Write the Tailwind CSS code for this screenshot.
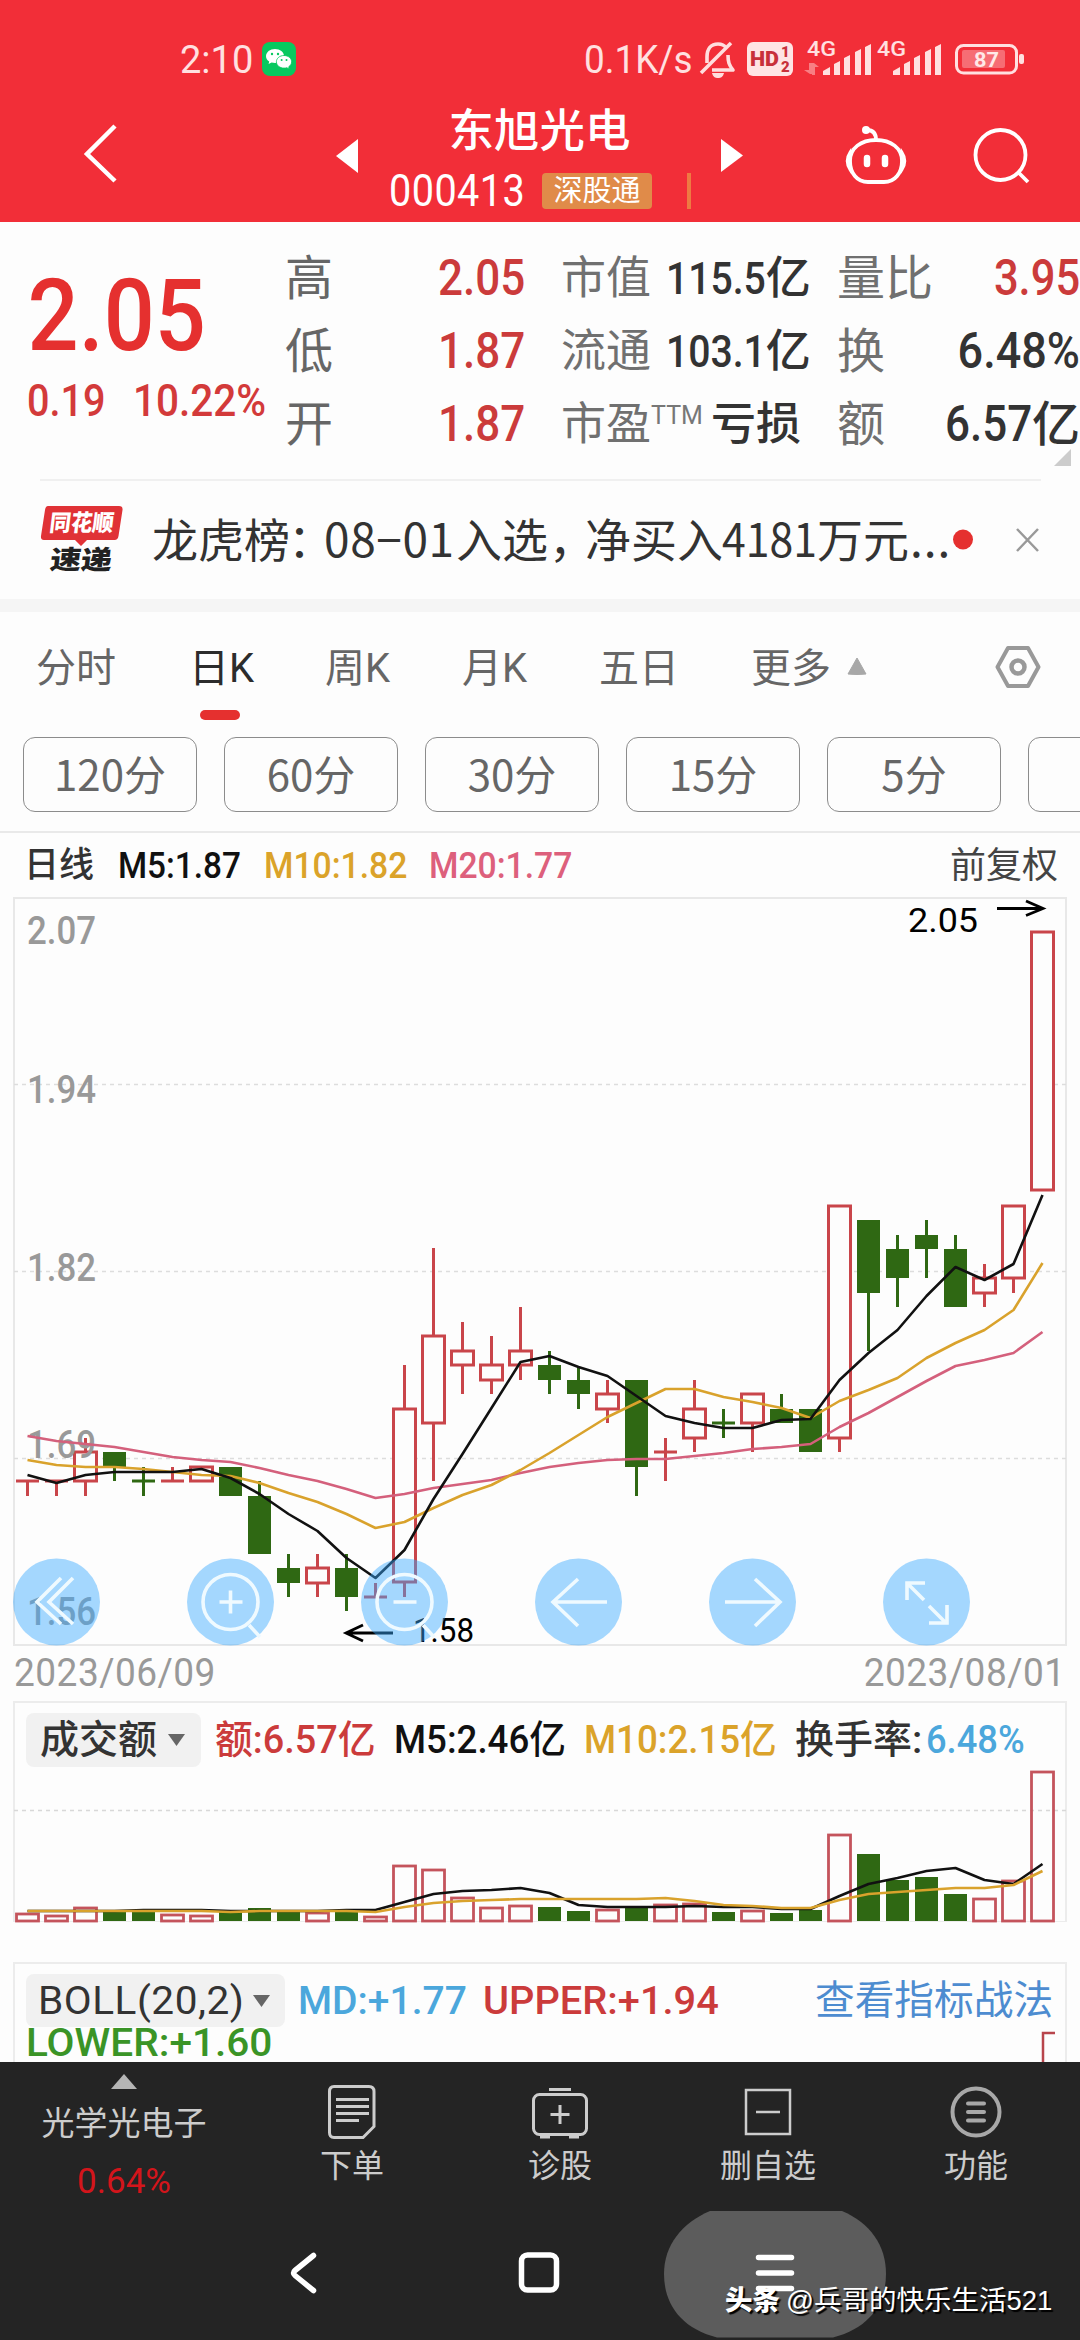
<!DOCTYPE html>
<html lang="zh-CN">
<head>
<meta charset="utf-8">
<title>东旭光电 000413</title>
<script src="https://cdn.jsdelivr.net/npm/@tailwindcss/browser@4"></script>
</head>
<body class="w-[1080px] h-[2340px] overflow-hidden bg-[#fdfdfd] text-[#333] whitespace-nowrap relative font-[family-name:Roboto,'Noto_Sans_CJK_SC',sans-serif]">

<!-- Header -->
<header class="h-[222px] bg-[#f22e38] text-white">
  <div class="h-[80px] pt-[39px] flex text-[#ffe0e0]">
    <span class="ml-[180px] w-[82px] text-[38px] leading-[42px]">2:10</span>
    <svg class="mt-[3px] w-[34px] h-[34px]" viewBox="0 0 34 34"><rect width="34" height="34" rx="8" fill="#07c95f"/><path d="M13 7c-5 0-9 3.200-9 7.200 0 2.200 1.200 4.100 3.200 5.400L6.600 22l3-1.500c1 .3 2.200.5 3.400.5 5 0 9-3.100 9-7S18 7 13 7z" fill="#fff"/><path d="M22 13.500c-4.300 0-7.600 2.800-7.600 6.300s3.300 6.300 7.600 6.300c1 0 2-.1 2.800-.4l2.500 1.300-.6-2.200c1.800-1.200 2.900-3 2.900-5 0-3.500-3.300-6.300-7.600-6.300z" fill="#fff" stroke="#07c95f" stroke-width=".8"/><g fill="#07c95f"><circle cx="10" cy="12" r="1.200"/><circle cx="16" cy="12" r="1.200"/><circle cx="19.600" cy="18" r="1"/><circle cx="24.500" cy="18" r="1"/></g></svg>
    <span class="ml-[288px] w-[112px] text-[38px] leading-[42px] origin-left scale-x-[.97]">0.1K/s</span>
    <svg class="w-[340px] h-[41px]" viewBox="696 39 340 41">
      <g fill="none" stroke="#ffdede" stroke-width="3.600" stroke-linejoin="round">
        <path d="M707 63V57c0-8 4-13 11-13 4 0 7 2 8.500 4M728 55c0 7 1 10 5 15h-21"/>
        <path d="M731 43L701 73"/>
      </g>
      <path d="M712 73h12c-1 4-3 5-6 5s-5-1-6-5z" fill="#ffdede"/>
      <rect x="747" y="42" width="46" height="34" rx="6" fill="#ffe4e4"/>
      <text x="750" y="66" font-size="21" font-weight="900" fill="#c8303a" textLength="29" lengthAdjust="spacingAndGlyphs">HD</text>
      <text x="781" y="57" font-size="15" font-weight="900" fill="#c8303a">1</text>
      <text x="781" y="72" font-size="15" font-weight="900" fill="#c8303a">2</text>
      <g fill="#ffe0e0">
        <text x="807" y="56" font-size="20" font-weight="500" textLength="29" lengthAdjust="spacingAndGlyphs">4G</text>
        <text x="877" y="56" font-size="20" font-weight="500" textLength="29" lengthAdjust="spacingAndGlyphs">4G</text>
        <path d="M823 75v-4l7-4v8zM834 75V64l6-3v14zM844 75V58l6-3v20zM855 75V52l6-3v26zM865 75V47l6-3v31z"/>
        <path d="M893 75v-4l7-4v8zM904 75V64l6-3v14zM914 75V58l6-3v20zM925 75V52l6-3v26zM935 75V47l6-3v31z"/>
        <path d="M804 70h5v-7h3v11h-2zM819 67h-4v8h-3V63h2z" opacity=".45"/>
      </g>
      <rect x="956.500" y="45.500" width="60" height="27.500" rx="7" fill="none" stroke="#ffe0e0" stroke-width="3"/>
      <rect x="962" y="50" width="43" height="18" rx="2" fill="#fff" opacity=".3"/>
      <rect x="1019" y="54" width="5" height="10" rx="2" fill="#ffe0e0"/>
      <text x="974" y="67" font-size="21" font-weight="700" fill="#ffe8e8" textLength="25" lengthAdjust="spacingAndGlyphs">87</text>
    </svg>
  </div>
  <div class="h-[142px] flex">
    <svg class="ml-[83px] mt-[44px] w-[34px] h-[60px]" viewBox="0 0 34 60" fill="none" stroke="#fff" stroke-width="4.500"><path d="M32 2L4 30l28 27"/></svg>
    <svg class="ml-[219px] mt-[59px] w-[22px] h-[34px]" viewBox="0 0 22 34"><path d="M22 0v34L0 17z" fill="#fff"/></svg>
    <div class="w-[363px] pt-[26px]">
      <div class="text-center text-[45.500px] leading-[51px] font-medium">东旭光电</div>
      <div class="mt-[4px] pl-[31px] flex items-center">
        <span class="w-[153px] text-[44px] leading-[60px] tracking-[.5px] origin-left scale-x-[.9]">000413</span>
        <span class="w-[110px] h-[36px] rounded-[4px] bg-[#e08b49] text-center text-[29px] leading-[36px]">深股通</span>
        <span class="ml-[35px] w-[4px] h-[36px] bg-[#ee7a42]"></span>
      </div>
    </div>
    <svg class="mt-[59px] w-[22px] h-[34px]" viewBox="0 0 22 34"><path d="M0 0v33l22-16.500z" fill="#fff"/></svg>
    <svg class="ml-[100px] mt-[44px] w-[66px] h-[62px]" viewBox="842 124 66 62" fill="none" stroke="#fff" stroke-width="3.800"><path d="M875 140c-15 0-26 8-26 21 0 12 7 21 18 21h16c11 0 18-9 18-21 0-13-11-21-26-21zM875 140c0-7-3-10-9-10"/><circle cx="865" cy="130" r="4" fill="#fff" stroke="none"/><path d="M849 152q-6 9 0 18zM901 152q6 9 0 18z" fill="#fff" stroke-width="2.500"/><path d="M866 158v6M884 158v6" stroke-width="6.500" stroke-linecap="round"/></svg>
    <svg class="ml-[64px] mt-[46px] w-[60px] h-[60px]" viewBox="972 126 60 60" fill="none" stroke="#fff" stroke-width="3.800"><circle cx="999.500" cy="155" r="25"/><path d="M1017 172l10 10"/></svg>
  </div>
</header>

<!-- Quote -->
<section class="h-[257px] flex relative">
  <div class="w-[285px] pt-[44px] text-[#e5302f] font-medium">
    <div class="pl-[28px] text-[101px] leading-[100px] origin-left scale-x-[.89]"><span class="ml-[3px]">2.05</span></div>
    <div class="mt-[9px] pl-[27px] flex text-[45px] leading-[52px] text-[#d33a3a]"><span class="w-[106px] origin-left scale-x-[.88]">0.19</span><span class="origin-left scale-x-[.9]">10.22%</span></div>
  </div>
  <div class="w-[240px] pt-[20px] text-[48px] leading-[73px]">
    <div class="flex justify-between"><span class="text-[#666]">高</span><b class="font-medium text-[50px] text-[#cb3b3b] origin-right scale-x-[.88]">2.05</b></div>
    <div class="flex justify-between"><span class="text-[#666]">低</span><b class="font-medium text-[50px] text-[#cb3b3b] origin-right scale-x-[.88]">1.87</b></div>
    <div class="flex justify-between"><span class="text-[#666]">开</span><b class="font-medium text-[50px] text-[#cb3b3b] origin-right scale-x-[.88]">1.87</b></div>
  </div>
  <div class="ml-[36px] mr-[3px] w-[240px] pt-[20px] text-[45px] leading-[73px]">
    <div class="flex justify-between"><span class="text-[#707070]">市值</span><span class="font-medium flex"><b class="font-medium origin-right scale-x-[.87]">115.5</b><span class="w-[42px]">亿</span></span></div>
    <div class="flex justify-between"><span class="text-[#707070]">流通</span><span class="font-medium flex"><b class="font-medium origin-right scale-x-[.87]">103.1</b><span class="w-[42px]">亿</span></span></div>
    <div class="flex"><span class="text-[#707070]">市盈</span><span class="w-[62px] h-[73px] text-[25px] leading-[56px] text-[#777]">TTM</span><span class="font-medium">亏损</span></div>
  </div>
  <div class="ml-[33px] w-[243px] pt-[20px] text-[48px] leading-[73px]">
    <div class="flex justify-between"><span class="text-[#707070]">量比</span><b class="font-medium text-[50px] text-[#cb3b3b] origin-right scale-x-[.87]">3.95</b></div>
    <div class="flex justify-between"><span class="text-[#707070]">换</span><b class="font-medium text-[50px] origin-right scale-x-[.9]">6.48%</b></div>
    <div class="flex justify-between"><span class="text-[#707070]">额</span><span class="font-medium flex"><b class="font-medium text-[50px] origin-right scale-x-[.88]">6.57</b>亿</span></div>
  </div>
  <svg class="absolute left-[1054px] top-[227px] w-[17px] h-[17px]" viewBox="0 0 17 17"><path d="M17 0v17H0z" fill="#ccc"/></svg>
</section>

<!-- News ticker -->
<section class="h-[120px] relative flex items-center before:absolute before:top-0 before:left-[40px] before:w-[1001px] before:h-[2px] before:bg-[#f0f0f0]">
  <svg class="ml-[40px] w-[84px] h-[76px]" viewBox="40 501 84 76">
    <path d="M48 506h71q4 0 3.500 4l-4 26q-.6 4-4 4H87l-6 6-6-6H44q-3.500 0-3-4l4-26q.6-4 3-4z" fill="#e03236"/>
    <g transform="skewX(-7)" font-weight="900" font-family="Noto Sans CJK SC"><text x="114" y="531" font-size="23" fill="#fff" textLength="64" lengthAdjust="spacingAndGlyphs">同花顺</text><text x="119" y="569" font-size="26" fill="#222" textLength="62" lengthAdjust="spacingAndGlyphs">速递</text></g>
  </svg>
  <div class="ml-[28px] mb-[4px] h-[60px] flex text-[46px] leading-[60px] font-[family-name:'Noto_Sans_CJK_SC']">
    <span class="w-[136px]">龙虎榜</span><span class="w-[36px] tracking-[-10px]">：</span><span class="w-[132px] tracking-[.6px]">08−01</span><span class="w-[93px]">入选</span><span class="w-[36px] tracking-[-10px]">，</span><span class="w-[137px]">净买入</span><span class="w-[95px] origin-left scale-x-[.93]">4181</span><span class="w-[93px]">万元</span><span class="tracking-[1px]">...</span>
  </div>
  <svg class="absolute left-[950px] top-[46px] w-[92px] h-[28px]" viewBox="950 525 92 28"><circle cx="963" cy="539.500" r="10" fill="#e5302f"/><path d="M1017 529l21 22M1038 529l-21 22" stroke="#999" stroke-width="2.500"/></svg>
</section>
<div class="h-[13px] bg-[#f5f5f5]"></div>

<!-- Period tabs -->
<nav class="h-[125px] relative flex text-[40px] leading-[113px] text-[#666]">
  <span class="ml-[36px] w-[153px]">分时</span>
  <span class="w-[136px] text-[#2c2c2c] relative">日K<i class="absolute left-[11px] top-[98px] w-[40px] h-[10px] rounded-full bg-[#e5302f]"></i></span>
  <span class="w-[137px]">周K</span><span class="w-[137px]">月K</span><span class="w-[152px]">五日</span><span class="w-[96px]">更多</span>
  <svg class="mt-[45px] w-[20px] h-[19px]" viewBox="0 0 20 19"><path d="M10 1l9 16q-9 1-18 0z" fill="#a8a8a8" stroke="#a8a8a8" stroke-linejoin="round"/></svg>
  <svg class="ml-[127px] mt-[32px] w-[48px] h-[46px]" viewBox="994 644 48 46" fill="none" stroke="#999" stroke-width="4" stroke-linejoin="round"><path d="M1008 648h20l10.500 19-10.500 19h-20l-10.500-19z"/><circle cx="1018" cy="667" r="6.500" stroke-width="4.500"/></svg>
</nav>
<div class="h-[94px] pl-[23px] overflow-hidden flex gap-[27px] text-[42px] leading-[75px] text-[#666] text-center font-[family-name:'Noto_Sans_CJK_SC'] *:shrink-0 *:w-[174px] *:h-[75px] *:rounded-[12px] *:border *:border-[#8c8c8c] *:leading-[70px]">
  <span>120分</span><span>60分</span><span>30分</span><span>15分</span><span>5分</span><span></span>
</div>

<!-- Moving-average legend -->
<div class="h-[66px] border-t-2 border-[#e9e9e9] flex text-[37px] leading-[66px] font-medium">
  <span class="ml-[24px] w-[94px] text-[35px]">日线</span>
  <span class="w-[146px] text-[#111] origin-left scale-x-[.9]">M5:1.87</span>
  <span class="w-[165px] text-[#dba32a] origin-left scale-x-[.91]">M10:1.82</span>
  <span class="w-[521px] text-[#dd607c] origin-left scale-x-[.91]">M20:1.77</span>
  <span class="text-[36px] font-normal text-[#444]">前复权</span>
</div>

<!-- Candlestick chart -->
<svg id="kline" class="block w-[1080px] h-[750px]" viewBox="0 896 1080 750"></svg>
<div class="h-[54px] px-[14px] flex justify-between text-[39px] leading-[52px] text-[#999] tracking-[.5px]">
  <span class="origin-left scale-x-[.95]">2023/06/09</span><span class="origin-right scale-x-[.95]">2023/08/01</span>
</div>

<!-- Turnover -->
<section class="ml-[13px] w-[1054px] h-[221px] border-2 border-[#ececec] border-b relative">
  <div class="pt-[10px] pl-[11px] flex text-[39px] leading-[54px] font-medium">
    <span class="w-[175px] h-[54px] pl-[14px] rounded-[8px] bg-[#f1f1f1] flex items-center gap-[11px]">成交额<svg class="w-[17px] h-[12px]" viewBox="0 0 17 12"><path d="M0 0h17L8.500 12z" fill="#666"/></svg></span>
    <span class="ml-[14px] w-[179px] text-[#cb3b3b] origin-left scale-x-[.97]">额:6.57亿</span>
    <span class="w-[190px] text-[#111] origin-left scale-x-[.94]">M5:2.46亿</span>
    <span class="w-[211px] text-[#dba32a] origin-left scale-x-[.94]">M10:2.15亿</span>
    <span class="w-[131px]">换手率:</span>
    <span class="text-[#4ba7dc] origin-left scale-x-[.93]">6.48%</span>
  </div>
  <svg id="volume" class="absolute -left-[15px] top-[62px] w-[1080px] h-[160px]" viewBox="0 1764 1080 160"></svg>
</section>
<div class="h-[40px]"></div>

<!-- BOLL -->
<section class="ml-[13px] w-[1054px] h-[100px] border-2 border-b-0 border-[#ececec] relative">
  <div class="pt-[10px] pl-[11px] flex text-[39px] leading-[54px] font-medium">
    <span class="w-[259px] h-[53px] pl-[12px] rounded-[8px] bg-[#f1f1f1] flex items-center"><span class="w-[215px] font-normal tracking-[.5px] origin-left scale-x-[1.04]">BOLL(20,2)</span><svg class="w-[17px] h-[12px]" viewBox="0 0 17 12"><path d="M0 0h17L8.500 12z" fill="#666"/></svg></span>
    <span class="ml-[13px] w-[185px] text-[#4ba7dc]">MD:+1.77</span>
    <span class="w-[332px] text-[#cb3b3b] origin-left scale-x-[1.02]">UPPER:+1.94</span>
    <span class="font-normal text-[39.700px] text-[#4d8cd0]">查看指标战法</span>
  </div>
  <div class="pl-[11px] -mt-[12px] text-[39px] leading-[54px] font-medium text-[#3a9426]"><span class="inline-block origin-left scale-x-[1.04]">LOWER:+1.60</span></div>
  <svg class="absolute left-[1026px] top-[67px] w-[14px] h-[31px]" viewBox="0 0 14 31" fill="none" stroke="#b8454c" stroke-width="2.500"><path d="M14 2H2v29"/></svg>
</section>

<!-- App toolbar -->
<footer class="h-[279px] bg-[#242424] relative">
  <div class="h-[149px] flex text-[32px] leading-[40px] text-[#ccc] text-center">
    <div class="w-[248px] pt-[12px]">
      <svg class="mx-auto w-[26px] h-[15px]" viewBox="0 0 26 15"><path d="M13 0l13 15H0z" fill="#b5b5b5"/></svg>
      <div class="mt-[15px] text-[33px]">光学光电子</div>
      <div class="mt-[18px] text-[35px] text-[#d3151b]">0.64%</div>
    </div>
    <div class="w-[208px] pt-[20px]">
      <svg class="mx-auto w-[60px] h-[60px]" viewBox="322 2081 60 60" fill="none" stroke="#ccc" stroke-width="3"><path d="M334 2085.500h35q5 0 5 5v35l-11 11h-29q-4.500 0-4.500-5v-41q0-5 4.500-5z"/><path d="M336 2098.500h33M336 2105.500h33M336 2112.500h33M336 2119.500h23"/></svg>
      <div class="mt-[4px]">下单</div>
    </div>
    <div class="w-[208px] pt-[20px]">
      <svg class="mx-auto w-[60px] h-[60px]" viewBox="530 2081 60 60" fill="none" stroke="#ccc" stroke-width="3"><rect x="533.500" y="2093.500" width="53" height="40" rx="6"/><path d="M549 2088.500h22M550.500 2113.500h19M560 2104v19"/><path d="M540 2135.500h10M569 2135.500h10" stroke-width="4"/></svg>
      <div class="mt-[4px]">诊股</div>
    </div>
    <div class="w-[208px] pt-[20px]">
      <svg class="mx-auto w-[60px] h-[60px]" viewBox="738 2081 60 60" fill="none" stroke="#ccc" stroke-width="2.500"><rect x="746" y="2089" width="44" height="44"/><path d="M756 2111h24"/></svg>
      <div class="mt-[4px]">删自选</div>
    </div>
    <div class="w-[208px] pt-[20px]">
      <svg class="mx-auto w-[60px] h-[60px]" viewBox="946 2081 60 60" fill="none" stroke="#a8a8a8" stroke-width="4"><circle cx="976" cy="2111" r="23.500"/><path d="M968 2102.500h16M968 2111h16M968 2119.500h16" stroke-linecap="round"/></svg>
      <div class="mt-[4px]">功能</div>
    </div>
  </div>
  <svg class="block w-[1080px] h-[130px]" viewBox="0 2210 1080 130" fill="none" stroke="#fff" stroke-width="5.500" stroke-linecap="round" stroke-linejoin="round">
    <path d="M710 2210h132c28 12 44 34 44 63s-16 54-53 63.500H717c-37-9.500-53-34.500-53-63.500s18-51 46-63z" fill="#5c5c5c" stroke="none"/>
    <path d="M313.500 2254.500l-18.500 15q-3 2.500 0 5l18.500 15"/>
    <rect x="521.500" y="2254" width="35" height="35" rx="6"/>
    <path d="M758.500 2256.500h33M758.500 2272h33M758.500 2287.500h33"/>
  </svg>
  <div class="absolute left-[725px] top-[217px] flex items-center text-[27.500px] leading-[44px] text-white [text-shadow:2px_2px_1px_#000] font-[family-name:'Liberation_Sans','Noto_Sans_CJK_SC',sans-serif]"><b class="w-[61px] font-black">头条</b><span>@兵哥的快乐生活521</span></div>
</footer>

<script>
const RED = '#c9454a', GREEN = '#2f6813';
const cx = i => 27.5 + i * 29;
const line = (pts, color) => `<polyline fill="none" stroke="${color}" stroke-width="2.600" stroke-linejoin="round" points="${pts.map((y, i) => cx(i) + ',' + y).join(' ')}"/>`;

// Each candle: colour, high, body top, body bottom, low
const candles = [
  ['r',1480,1480,1480,1495],['r',1480,1480,1480,1495],['r',1437,1451,1480,1495],['g',1451,1451,1466,1480],['g',1466,1480,1480,1495],['r',1466,1480,1480,1480],
  ['r',1466,1466,1480,1480],['g',1466,1466,1495,1495],['g',1480,1495,1553,1553],['g',1553,1567,1582,1596],['r',1553,1567,1582,1596],['g',1553,1567,1596,1610],
  ['r',1582,1596,1596,1596],['r',1364,1408,1581,1596],['r',1247,1335,1422,1480],['r',1321,1350,1364,1393],['r',1335,1364,1379,1393],['r',1306,1350,1364,1379],
  ['g',1350,1364,1379,1393],['g',1365,1379,1393,1408],['r',1379,1393,1408,1422],['g',1379,1379,1466,1495],['r',1437,1451,1451,1480],['r',1379,1408,1437,1451],
  ['g',1408,1422,1422,1437],['r',1393,1393,1422,1451],['g',1393,1408,1422,1422],['g',1408,1408,1451,1451],['r',1205,1205,1437,1451],['g',1219,1219,1292,1350],
  ['g',1234,1248,1277,1306],['g',1219,1234,1248,1277],['g',1234,1248,1306,1306],['r',1263,1277,1292,1306],['r',1205,1205,1277,1292],['r',931,931,1189,1189]];
const ma5 = [1474,1482,1474,1471,1471,1471,1468,1477,1493,1513,1530,1557,1577,1549,1498,1453,1407,1361,1355,1366,1375,1395,1415,1422,1427,1427,1419,1418,1379,1352,1329,1295,1266,1279,1263,1194];
const ma10 = [1459,1464,1466,1466,1468,1471,1474,1475,1482,1492,1501,1513,1527,1521,1507,1494,1484,1469,1452,1434,1416,1402,1388,1388,1396,1401,1407,1417,1400,1389,1377,1357,1342,1329,1309,1262];
const ma20 = [1435,1440,1443,1446,1451,1456,1459,1461,1467,1474,1480,1488,1497,1493,1487,1483,1479,1472,1466,1462,1459,1458,1458,1455,1452,1448,1446,1443,1426,1412,1396,1380,1365,1359,1352,1331];

let s = '<rect x="14" y="897" width="1052" height="747" fill="none" stroke="#e8e8e8" stroke-width="2"/>';
for (const y of [1083.5, 1270.5, 1457.5]) s += `<path d="M14 ${y}H1066" stroke="#ddd" stroke-width="1.500" stroke-dasharray="4 4"/>`;
candles.forEach(([c, hi, top, bot, lo], i) => {
  const x = cx(i), col = c === 'r' ? RED : GREEN;
  if (hi < top) s += `<path d="M${x} ${hi}V${top}" stroke="${col}" stroke-width="3"/>`;
  if (lo > bot) s += `<path d="M${x} ${bot}V${lo}" stroke="${col}" stroke-width="3"/>`;
  if (top === bot) s += `<path d="M${x - 11.5} ${top}h23" stroke="${col}" stroke-width="3"/>`;
  else if (c === 'r') s += `<rect x="${x - 11}" y="${top}" width="22" height="${bot - top}" fill="#fdfdfd" stroke="${col}" stroke-width="3"/>`;
  else s += `<rect x="${x - 11.5}" y="${top}" width="23" height="${bot - top}" fill="${col}"/>`;
});
for (const [t, y] of [['2.07', 943], ['1.94', 1102], ['1.82', 1280], ['1.69', 1457], ['1.56', 1624]])
  s += `<text x="27" y="${y}" font-size="38" font-weight="500" fill="#999" textLength="69" lengthAdjust="spacingAndGlyphs">${t}</text>`;
s += line(ma20, '#d4607c') + line(ma10, '#d9a22c') + line(ma5, '#111');
s += `<g fill="none" stroke="#000" stroke-width="2.800"><path d="M997 907.500h46M1026 900l17 7.500-17 7"/><path d="M393 1632h-46M363 1624l-17 8 17 8"/></g>
<text x="908" y="931" font-size="33" fill="#000" textLength="70" lengthAdjust="spacingAndGlyphs">2.05</text>
<text x="413" y="1641" font-size="33" fill="#000" textLength="61" lengthAdjust="spacingAndGlyphs">1.58</text>`;
const icons = [
  '<path d="M61 1577l-24 24 24 22M73 1577l-24 24 24 22"/>',
  '<circle cx="230.500" cy="1601" r="27.500"/><path d="M219.500 1601h23M230.500 1589.500v23M249 1624l11 12"/>',
  '<circle cx="404.500" cy="1601" r="27.500"/><path d="M393.500 1601h23M423 1624l11 12"/>',
  '<path d="M607 1601h-54M578 1578l-25 23 25 24"/>',
  '<path d="M725 1601h54M755 1578l25 23-25 24"/>',
  '<path d="M924 1599l-17-17M925 1582h-18v17M929 1605l17 17M929 1622h18v-18"/>'];
icons.forEach((p, i) => s += `<circle cx="${56.5 + i * 174}" cy="1601" r="43.500" fill="#37a9ff" fill-opacity=".45"/><g fill="none" stroke="#effaff" stroke-width="3.600">${p}</g>`);
document.getElementById('kline').innerHTML = s;

const vol = [1912,1914,1906,1911,1911,1913,1914,1911,1907,1911,1911,1911,1915,1864,1868,1896,1906,1904,1906,1910,1908,1905,1903,1902,1911,1909,1912,1909,1833,1853,1879,1876,1893,1897,1879,1770];
const v5 = [1910,1910,1910,1910,1909,1909,1909,1910,1910,1910,1910,1909,1909,1901,1893,1890,1889,1887,1892,1904,1906,1906,1906,1905,1906,1906,1908,1908,1895,1883,1877,1870,1867,1879,1883,1863];
const v10 = [1910,1910,1910,1910,1910,1910,1910,1911,1910,1910,1910,1910,1911,1906,1902,1900,1899,1898,1898,1898,1898,1898,1897,1900,1904,1905,1907,1907,1899,1893,1891,1889,1887,1887,1884,1870];
let v = '<path d="M14 1809.500H1066" stroke="#d8d8d8" stroke-width="1.500" stroke-dasharray="4 4"/>';
vol.forEach((y, i) => {
  const x = cx(i);
  v += candles[i][0] === 'r'
    ? `<rect x="${x - 11}" y="${y + 1}" width="22" height="${1919 - y}" fill="none" stroke="#c4545c" stroke-width="2.800"/>`
    : `<rect x="${x - 11.5}" y="${y}" width="23" height="${1920 - y}" fill="${GREEN}"/>`;
});
v += line(v5, '#111') + line(v10, '#d9a22c');
document.getElementById('volume').innerHTML = v;
</script>
</body>
</html>
